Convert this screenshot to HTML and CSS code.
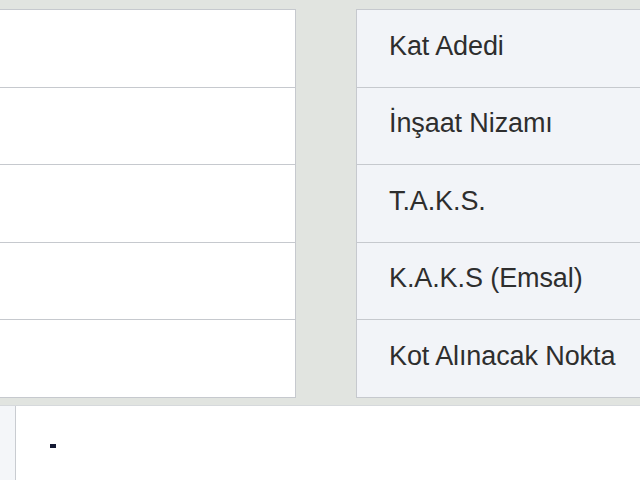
FILE: index.html
```html
<!DOCTYPE html>
<html lang="tr">
<head>
    <meta charset="UTF-8">
    <meta name="viewport" content="width=device-width, initial-scale=1.0">
    <title>İmar Bilgileri</title>
    <link rel="stylesheet" href="styles.css">
</head>
<body>
    <div class="imar-table">
        <div class="value-col">
            <div class="cell"></div>
            <div class="cell"></div>
            <div class="cell"></div>
            <div class="cell"></div>
            <div class="cell"></div>
        </div>
        <div class="label-col">
            <div class="cell">Kat Adedi</div>
            <div class="cell">İnşaat Nizamı</div>
            <div class="cell">T.A.K.S.</div>
            <div class="cell">K.A.K.S (Emsal)</div>
            <div class="cell">Kot Alınacak Nokta</div>
        </div>
    </div>

    <!-- alt panel -->
    <div class="bottom-panel">
        <div class="side"></div>
        <div class="content">
            <ul class="notes">
                <li></li>
            </ul>
        </div>
    </div>
</body>
</html>
```

FILE: styles.css
```css
body {
    margin: 0;
    font-family: "Liberation Sans", Arial, sans-serif;
    background-color: #e1e4e0;
    color: #2e2e2e;
    height: 480px;
    overflow: hidden;
}
.imar-table {
    display: flex;
    gap: 60px;
    padding-top: 9px;
}
.value-col {
    width: 296px;
    border-top: 1px solid #c6c9ce;
    border-right: 1px solid #c6c9ce;
    box-sizing: border-box;
}
.label-col {
    flex: 1;
    border-top: 1px solid #c6c9ce;
    border-left: 1px solid #c6c9ce;
}
.cell {
    height: 76.5px;
    border-bottom: 1px solid #c6c9ce;
    background: #fff;
}
.label-col .cell {
    background: #f2f4f8;
    display: flex;
    align-items: center;
    padding-left: 32px;
    padding-bottom: 4px;
    box-sizing: border-box;
    height: 77.5px;
    font-size: 27px;
    letter-spacing: -0.1px;
}
.bottom-panel {
    display: flex;
    margin-top: 7px;
    height: 80px;
    border-top: 1px solid #d6d9dc;
}
.side {
    width: 15px;
    background: #f4f6f9;
    border-right: 1px solid #c9ccd1;
}
.content {
    flex: 1;
    background: #fff;
}
.notes {
    margin: 0;
    padding: 0;
    list-style: none;
}
.notes li {
    width: 6px;
    height: 4px;
    margin: 38px 0 0 34px;
    background: #141a33;
}
```
